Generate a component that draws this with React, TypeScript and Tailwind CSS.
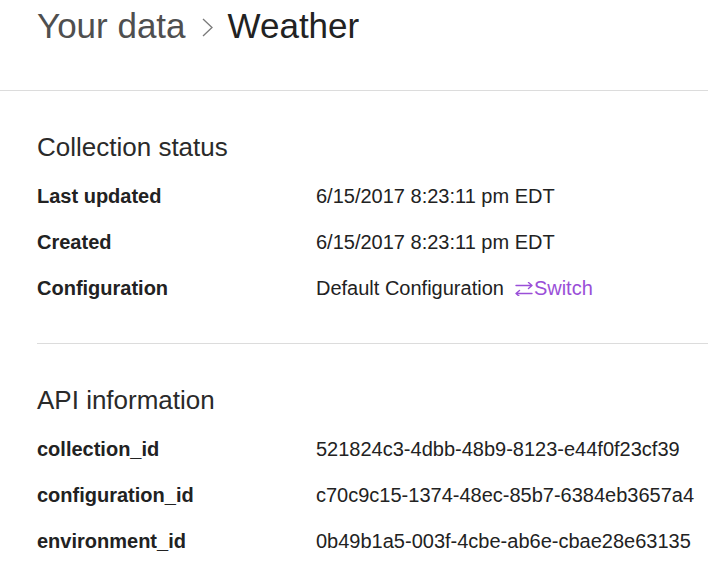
const font = { fontFamily: '"Liberation Sans", Arial, Helvetica, sans-serif' };

function SwitchIcon() {
  return (
    <svg width="20" height="14" viewBox="0 0 20 14" fill="none" stroke="currentColor" strokeWidth="1.4" strokeLinecap="round" strokeLinejoin="round">
      <path d="M2 3.5h16M14.5 0.5l3.5 3-3.5 3" />
      <path d="M18 11.5H2M5.5 8.5L2 11.5l3.5 3" />
    </svg>
  );
}

function Row({ label, children }: { label: string; children: React.ReactNode }) {
  return (
    <div className="flex h-[46px] items-center text-[20px] leading-[46px] text-[#222]">
      <div className="w-[279px] shrink-0 font-bold">{label}</div>
      <div className="flex items-center">{children}</div>
    </div>
  );
}

function Section({ title, children }: { title: string; children: React.ReactNode }) {
  return (
    <section className="pt-[40px]">
      <h2 className="h-[32px] text-[26px] leading-[32px] text-[#2a2a2a]">{title}</h2>
      <div className="mt-[10px]">{children}</div>
    </section>
  );
}

export default function App() {
  return (
    <div style={font} className="h-[561px] w-[708px] overflow-hidden bg-white">
      <header className="flex h-[90px] items-start pl-[37px] pt-[6px]">
        <div className="flex h-[40px] items-center text-[35px] leading-[40px]">
          <span className="text-[#4f4f4f]">Your data</span>
          <svg className="ml-[16px] mr-[15px] mt-[3px]" width="11" height="19" viewBox="0 0 11 19" fill="none" stroke="#7a7a7a" strokeWidth="1.3">
            <path d="M1 1l9 8.5L1 18" />
          </svg>
          <span className="text-[#222]">Weather</span>
        </div>
      </header>
      <div className="h-px bg-[#dcdcdc]" />
      <div className="pl-[37px]">
        <Section title="Collection status">
          <Row label="Last updated">6/15/2017 8:23:11 pm EDT</Row>
          <Row label="Created">6/15/2017 8:23:11 pm EDT</Row>
          <Row label="Configuration">
            <span>Default Configuration</span>
            <button type="button" className="ml-[10px] flex items-center text-[#9a4fd8]">
              <span className="mt-[2px]">
                <SwitchIcon />
              </span>
              <span>Switch</span>
            </button>
          </Row>
        </Section>
        <div className="mt-[32px] h-px bg-[#dcdcdc]" />
        <Section title="API information">
          <Row label="collection_id">521824c3-4dbb-48b9-8123-e44f0f23cf39</Row>
          <Row label="configuration_id">c70c9c15-1374-48ec-85b7-6384eb3657a4</Row>
          <Row label="environment_id">0b49b1a5-003f-4cbe-ab6e-cbae28e63135</Row>
        </Section>
      </div>
    </div>
  );
}
